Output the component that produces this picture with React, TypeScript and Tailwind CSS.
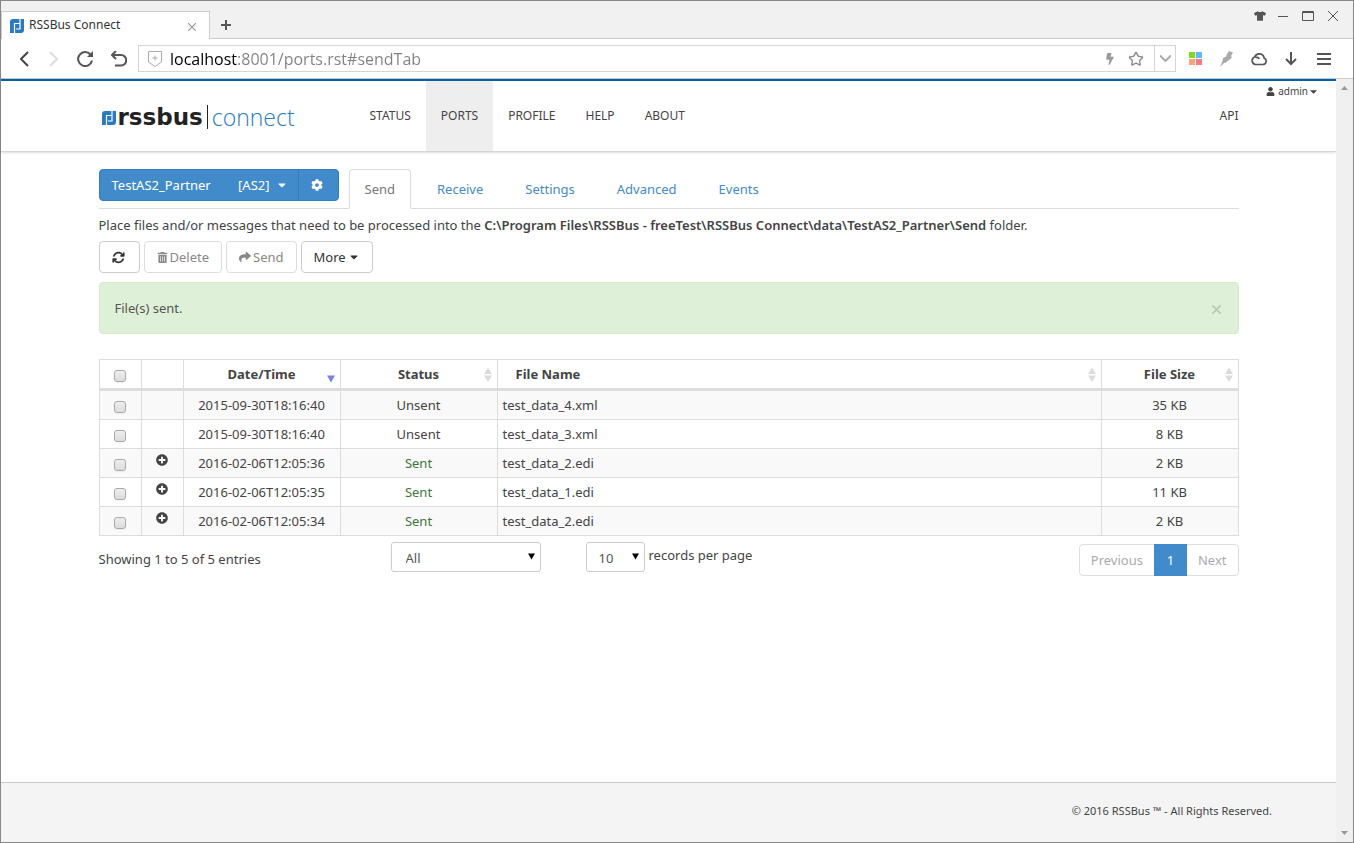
/**
 * Ports page: send tab with the file table, inside its browser window
 */
import React, { useState } from "react";
import { FaBolt, FaCaretDown, FaCog, FaPlusCircle, FaShare, FaTrashAlt, FaTshirt, FaUser } from "react-icons/fa";
import { FaArrowsRotate } from "react-icons/fa6";
import { Star } from "lucide-react";

interface FileRow {
  id: string;
  date: string;
  status: "Unsent" | "Sent";
  name: string;
  size: string;
}

const ROWS: FileRow[] = [
  { id: "f1", date: "2015-09-30T18:16:40", status: "Unsent", name: "test_data_4.xml", size: "35 KB" },
  { id: "f2", date: "2015-09-30T18:16:40", status: "Unsent", name: "test_data_3.xml", size: "8 KB" },
  { id: "f3", date: "2016-02-06T12:05:36", status: "Sent", name: "test_data_2.edi", size: "2 KB" },
  { id: "f4", date: "2016-02-06T12:05:35", status: "Sent", name: "test_data_1.edi", size: "11 KB" },
  { id: "f5", date: "2016-02-06T12:05:34", status: "Sent", name: "test_data_2.edi", size: "2 KB" },
];

const NAV = ["STATUS", "PORTS", "PROFILE", "HELP", "ABOUT"];
const TABS = ["Send", "Receive", "Settings", "Advanced", "Events"];

const BTN = "flex h-8 items-center gap-[2px] rounded border border-[#ccc] bg-white px-3 text-[#333] disabled:border-[#ddd] disabled:text-[#888]";
const CELL = "border border-[#ddd]";
const SELECT = "h-[30px] w-full appearance-none rounded-[3px] border border-[#ccc] bg-white pt-[2px] text-[#555]";

const Mark: React.FC<{ className: string }> = ({ className }) => (
  <svg className={className} viewBox="0 0 14 14" aria-hidden="true">
    <path d="M3 0h11v11a3 3 0 0 1-3 3H0V3a3 3 0 0 1 3-3z" fill="#2a7ac0" />
    <path d="M4.500 14V4.500h5.500M10 0v10H6" fill="none" stroke="#fff" strokeWidth="1.200" />
  </svg>
);

const CheckBox: React.FC<{ label: string }> = ({ label }) => (
  <input
    type="checkbox"
    aria-label={label}
    className="mx-auto mt-[3px] block size-3 appearance-none rounded-[3px] border border-[#aaa] bg-linear-to-b from-[#eee] to-[#dcdcdc] shadow-xs checked:from-[#428bca] checked:to-[#3276b1]"
  />
);

const SortIcon: React.FC<{ active?: boolean }> = ({ active }) => (
  <svg className="absolute right-[5px] top-[7px] h-4 w-2" viewBox="0 0 8 16" aria-hidden="true">
    {active ? (
      <path d="M0 8.500h8L4 15.500z" fill="#7b80e0" />
    ) : (
      <path d="M4 .5l4 6.500H0zM0 8.500h8L4 15z" fill="#dcdcdc" />
    )}
  </svg>
);

const SelectArrow: React.FC = () => (
  <svg className="pointer-events-none absolute right-[6px] top-[11px] size-[7px]" viewBox="0 0 7 7" aria-hidden="true">
    <path d="M0 .5h7l-3.500 6z" fill="#000" />
  </svg>
);

const BrowserChrome: React.FC = () => {
  const [url, setUrl] = useState("localhost:8001/ports.rst#sendTab");

  return (
    <header className="text-xs text-[#333]">
      {/* Tab strip */}
      <div className="flex h-[38px] items-end justify-between border-b border-[#ccc] bg-[#f1f1f1]">
        <div className="flex items-end">
          <div className="-mb-px flex h-7 w-[209px] items-center border border-b-0 border-[#ccc] bg-white pl-2 pr-[13px]">
            <Mark className="size-[14px]" />
            <span className="ml-[5px] flex-1 pb-px">RSSBus Connect</span>
            <button aria-label="Close tab" className="mt-[2px]">
              <svg className="size-2" viewBox="0 0 8 8" stroke="#999" strokeWidth="1.200">
                <path d="M0 0l8 8M8 0L0 8" />
              </svg>
            </button>
          </div>
          <button aria-label="New tab" className="mb-2 ml-[11px]">
            <svg className="size-[10px]" viewBox="0 0 10 10" stroke="#555" strokeWidth="2">
              <path d="M5 0v10M0 5h10" />
            </svg>
          </button>
        </div>
        <div className="flex items-center gap-[14px] self-start pr-[15px] pt-[9px] text-[#555]">
          <button aria-label="Skins" className="mr-[-2px]"><FaTshirt className="size-3" /></button>
          <button aria-label="Minimize">
            <svg className="size-[10px]" viewBox="0 0 10 10" stroke="currentColor"><path d="M0 5.500h10" /></svg>
          </button>
          <button aria-label="Maximize">
            <svg className="h-[10px] w-3" viewBox="0 0 12 10" fill="none" stroke="currentColor"><path d="M.5.5h11v9H.5zM0 1.500h12" /></svg>
          </button>
          <button aria-label="Close">
            <svg className="size-[10px]" viewBox="0 0 10 10" stroke="currentColor"><path d="M0 0l10 10M10 0L0 10" /></svg>
          </button>
        </div>
      </div>

      {/* Toolbar */}
      <div className="flex h-10 items-center border-b border-[#ccc] bg-white pl-[18px] pr-[22px]">
        <div className="flex items-center gap-[18px]">
          <button aria-label="Back" className="mr-[2px]">
            <svg className="h-4 w-[10px]" viewBox="0 0 10 16" fill="none" stroke="#444" strokeWidth="2"><path d="M9 1L2 8l7 7" /></svg>
          </button>
          <button aria-label="Forward">
            <svg className="h-4 w-[10px]" viewBox="0 0 10 16" fill="none" stroke="#ddd" strokeWidth="2"><path d="M1 1l7 7-7 7" /></svg>
          </button>
          <button aria-label="Reload">
            <svg className="size-4" viewBox="0 0 16 16" fill="none" stroke="#555" strokeWidth="2">
              <path d="M13.500 3.500A7 7 0 1 0 15 9.500" />
              <path d="M16 0v6h-6z" fill="#555" stroke="none" />
            </svg>
          </button>
          <button aria-label="Undo">
            <svg className="size-4" viewBox="0 0 16 16" fill="none" stroke="#555" strokeWidth="2"><path d="M5 0L1 4l4 4M1 4h9a5 5 0 0 1 0 10.500H4" /></svg>
          </button>
        </div>
        <div className="ml-[11px] flex h-[27px] flex-1 items-center border border-[#d5d5d5] pl-[9px]">
          <svg className="h-4 w-[14px]" viewBox="0 0 14 16" fill="none" stroke="#aaa">
            <path d="M.5.5h13v10.500L7 15.500.5 11zM7 4.500v5M4.500 7h5" />
          </svg>
          {/* host in black, the rest of the address in grey */}
          <input
            aria-label="Address"
            value={url}
            onChange={(e) => setUrl(e.target.value)}
            className="ml-2 flex-1 bg-linear-to-r from-black from-[67px] to-[#808080] to-[67px] bg-clip-text font-['Open_Sans',sans-serif] text-base leading-6 text-transparent caret-black outline-none"
          />
          <FaBolt className="size-3 text-[#999]" />
          <button aria-label="Bookmark" className="ml-3 mr-[10px]"><Star className="size-4 text-[#888]" /></button>
          <button aria-label="History" className="flex h-[25px] w-[21px] items-center justify-center border-l border-[#d5d5d5]">
            <svg className="h-[7px] w-[11px]" viewBox="0 0 11 7" fill="none" stroke="#aaa" strokeWidth="2"><path d="M0 .5L5.500 6 11 .5" /></svg>
          </button>
        </div>
        <div className="ml-[13px] flex items-center gap-[18px] text-[#555]">
          <button aria-label="Apps">
            <svg className="size-[13px]" viewBox="0 0 13 13">
              <path d="M0 0h6v6H0z" fill="#7ddc1f" />
              <path d="M7 0h6v6H7z" fill="#5eb8ff" />
              <path d="M0 7h6v6H0z" fill="#ffa678" />
              <path d="M7 7h6v6H7z" fill="#f27d87" />
            </svg>
          </button>
          <button aria-label="Capture">
            <svg className="h-4 w-[13px]" viewBox="0 0 13 16" fill="#aaa"><path d="M9 0l4 1.500-2 3.500 1 1.500L6 11.500l-2 .5-4 4 2.500-6L3 7l3-1.500L7 3z" /></svg>
          </button>
          <button aria-label="Cloud">
            <svg className="h-[14px] w-4" viewBox="0 0 16 14" fill="none" stroke="currentColor" strokeWidth="1.700">
              <path d="M4.500 12.500h7.200a3.400 3.400 0 0 0 1.400-6.500A4.900 4.900 0 0 0 3.700 5a3.900 3.900 0 0 0 .8 7.500zM4.500 5.500c2-.6 3.300.3 3.800 1.500" />
            </svg>
          </button>
          <button aria-label="Downloads">
            <svg className="h-[14px] w-3" viewBox="0 0 12 14" fill="none" stroke="currentColor" strokeWidth="2"><path d="M6 0v12M1 7l5 5 5-5" /></svg>
          </button>
          <button aria-label="Menu" className="ml-[2px]">
            <svg className="h-3 w-[14px]" viewBox="0 0 14 12" stroke="currentColor" strokeWidth="2"><path d="M0 1h14M0 6h14M0 11h14" /></svg>
          </button>
        </div>
      </div>
    </header>
  );
};

const NavBar: React.FC = () => (
  <div className="flex h-[73px] border-b border-t-2 border-b-[#d5d5d5] border-t-[#0060a8] bg-white text-xs shadow-sm">
    <div className="flex-1 pl-[17px]" />
    <nav className="flex w-[1140px] items-stretch">
      <a href="#" className="flex w-64 items-center pl-[3px] pt-[2px] leading-8">
        <Mark className="mt-[2px] size-[14px]" />
        <span className="ml-[2px] font-['DejaVu_Sans',sans-serif] text-[23px] font-bold text-[#222]">rssbus</span>
        <span className="mx-1 h-6 w-px bg-[#222]" />
        <span className="font-['Open_Sans',sans-serif] text-[23px] font-light text-[#2a7ac0]">connect</span>
      </a>
      {NAV.map((item) => (
        <a key={item} href="#" className={`flex items-center px-[15px] ${item === "PORTS" ? "bg-[#eee]" : ""}`}>
          {item}
        </a>
      ))}
      <a href="#" className="ml-auto flex items-center">API</a>
    </nav>
    <div className="flex flex-1 items-start justify-end pr-[17px]">
      <button className="flex items-center text-[10px] leading-5">
        <FaUser className="mr-[3px] size-[9px]" />
        admin
        <FaCaretDown className="size-[11px]" />
      </button>
    </div>
  </div>
);

const FileTable: React.FC = () => (
  <table className="mt-[25px] w-full table-fixed border-collapse text-center">
    <colgroup>
      <col className="w-[42px]" />
      <col className="w-[42px]" />
      <col className="w-[157px]" />
      <col className="w-[157px]" />
      <col />
      <col className="w-[137px]" />
    </colgroup>
    <thead>
      <tr className="h-[30px] border-b-3 border-[#ddd]">
        <th className={CELL}><CheckBox label="Select all" /></th>
        <th className={CELL} />
        <th className={`relative ${CELL}`}>Date/Time<SortIcon active /></th>
        <th className={`relative ${CELL}`}>Status<SortIcon /></th>
        <th className={`relative pl-[18px] text-left ${CELL}`}>File Name<SortIcon /></th>
        <th className={`relative ${CELL}`}>File Size<SortIcon /></th>
      </tr>
    </thead>
    <tbody>
      {ROWS.map((row) => (
        <tr key={row.id} className="h-[29px] first:h-[30px] odd:bg-[#f9f9f9]">
          <td className={CELL}><CheckBox label={`Select ${row.name}`} /></td>
          <td className={CELL}>
            {row.status === "Sent" && (
              <button aria-label={`Expand ${row.name}`} className="block w-full pb-[6px]">
                <FaPlusCircle className="mx-auto size-3" />
              </button>
            )}
          </td>
          <td className={CELL}>{row.date}</td>
          <td className={`${CELL} ${row.status === "Sent" ? "text-[#3c763d]" : ""}`}>{row.status}</td>
          <td className={`pl-[5px] text-left ${CELL}`}>{row.name}</td>
          <td className={CELL}>{row.size}</td>
        </tr>
      ))}
    </tbody>
  </table>
);

const App: React.FC = () => {
  const [tab, setTab] = useState("Send");
  const [alertOpen, setAlertOpen] = useState(true);

  return (
    <div className="flex min-h-screen flex-col border border-[#888] bg-white font-['Noto_Sans',sans-serif] text-[13px] leading-5 text-[#444]">
      <BrowserChrome />
      <div className="flex flex-1">
        <div className="flex min-w-0 flex-1 flex-col">
          <NavBar />
          <main className="mx-auto w-full max-w-[1140px] flex-1">
            {/* Port picker and tabs */}
            <div className="mt-[17px] flex items-start gap-[10px] border-b border-[#ddd]">
              <div className="flex h-8 w-60 rounded border border-[#357ebd] bg-[#428bca] text-white">
                <button className="flex flex-1 items-center justify-between pl-3 pr-[10px]">
                  <span>TestAS2_Partner</span>
                  <span className="flex items-center gap-[6px]">[AS2] <FaCaretDown className="size-3" /></span>
                </button>
                <button aria-label="Port settings" className="flex w-10 items-center justify-center border-l border-[#357ebd] pr-[2px]">
                  <FaCog className="size-3" />
                </button>
              </div>
              <div role="tablist" className="-mb-px flex gap-[10px]">
                {TABS.map((t) => (
                  <button
                    key={t}
                    role="tab"
                    aria-selected={t === tab}
                    onClick={() => setTab(t)}
                    className={`h-10 rounded-t border px-[15px] ${
                      t === tab ? "border-[#ddd] border-b-white bg-white text-[#777]" : "border-transparent text-[#428bca]"
                    }`}
                  >
                    {t}
                  </button>
                ))}
              </div>
            </div>

            <p className="mt-[6px]">
              Place files and/or messages that need to be processed into the{" "}
              <strong className="font-semibold">C:\Program Files\RSSBus - freeTest\RSSBus Connect\data\TestAS2_Partner\Send</strong> folder.
            </p>

            <div className="mt-[6px] flex gap-1">
              <button aria-label="Refresh" className={BTN}><FaArrowsRotate className="mr-[2px] size-[13px]" /></button>
              <button disabled className={BTN}><FaTrashAlt className="size-[11px]" />Delete</button>
              <button disabled className={BTN}><FaShare className="size-3" />Send</button>
              <button className={BTN}>More<FaCaretDown className="size-3" /></button>
            </div>

            {alertOpen && (
              <div role="alert" className="mt-[9px] flex h-[52px] items-center justify-between rounded border border-[#d6e9c6] bg-[#dff0d8] px-[15px] text-[#555]">
                File(s) sent.
                <button aria-label="Dismiss" onClick={() => setAlertOpen(false)} className="px-[2px] pt-[2px]">
                  <svg className="size-[9px]" viewBox="0 0 9 9" stroke="#b5cbb0" strokeWidth="1.600"><path d="M0 0l9 9M9 0L0 9" /></svg>
                </button>
              </div>
            )}

            <FileTable />

            <div className="mt-[6px] flex items-start">
              <p className="w-[292px] pt-[7px]">Showing 1 to 5 of 5 entries</p>
              <div className="relative w-[150px]">
                <select aria-label="Status filter" className={`${SELECT} px-[14px]`}>
                  <option>All</option>
                  <option>Sent</option>
                  <option>Unsent</option>
                </select>
                <SelectArrow />
              </div>
              <label className="ml-[45px] flex gap-1">
                <span className="relative w-[59px]">
                  <select className={`${SELECT} px-3`}>
                    <option>10</option>
                    <option>25</option>
                    <option>50</option>
                  </select>
                  <SelectArrow />
                </span>
                <span className="pt-[3px]">records per page</span>
              </label>
              <div className="ml-auto mt-[2px] flex h-8 items-stretch rounded border border-[#ddd] text-[#aaa]">
                <button disabled className="px-[11px]">Previous</button>
                <button aria-current="page" className="-my-px w-[33px] bg-[#428bca] text-white">1</button>
                <button disabled className="px-[11px]">Next</button>
              </div>
            </div>
          </main>
          <footer className="flex h-[60px] items-center justify-end border-t border-[#ccc] bg-[#f4f4f4] pb-[3px] pr-16 text-[11px]">
            © 2016 RSSBus ™ - All Rights Reserved.
          </footer>
        </div>

        {/* Scrollbar track */}
        <div aria-hidden="true" className="flex w-[17px] flex-col items-center justify-between bg-[#f0f0f0] py-[7px]">
          <svg className="h-1 w-[7px]" viewBox="0 0 7 4" fill="#999"><path d="M0 4h7L3.500 0z" /></svg>
          <svg className="h-1 w-[7px]" viewBox="0 0 7 4" fill="#999"><path d="M0 0h7L3.500 4z" /></svg>
        </div>
      </div>
    </div>
  );
};

export default App;
